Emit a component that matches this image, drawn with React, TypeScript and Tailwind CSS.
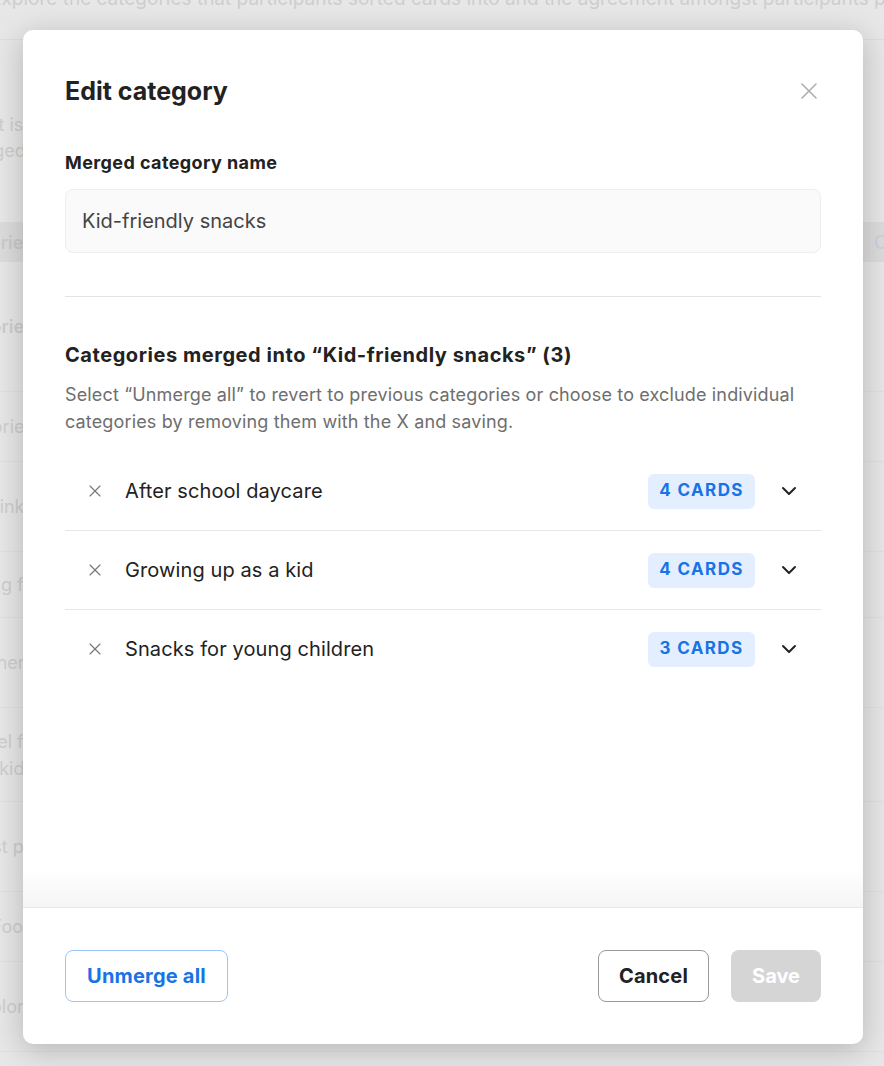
import { X, ChevronDown } from 'lucide-react'

const merged = [
  { name: 'After school daycare', cards: 4 },
  { name: 'Growing up as a kid', cards: 4 },
  { name: 'Snacks for young children', cards: 3 },
]

const behindRows = [
  { lines: ['Categories'], h: 'h-[130px]', bold: true },
  { lines: ['Categories'], h: 'h-[70px]' },
  { lines: ['Drinks'], h: 'h-[90px]' },
  { lines: ['Eating fo'], h: 'h-[66px]' },
  { lines: ['Another i'], h: 'h-[90px]' },
  { lines: ['Travel fo', 'kids'], h: 'h-[94px]' },
  { lines: ['Fast pa'], h: 'h-[90px]' },
  { lines: ['Food'], h: 'h-[70px]' },
  { lines: ['Explore'], h: 'h-[90px]' },
]

function Backdrop() {
  return (
    <div className="h-[1066px] w-[884px] overflow-hidden bg-[#e7e7e7] font-['Inter',sans-serif] text-[18px] text-[#cecece]">
      <p className="-ml-[10px] -mt-[13px] whitespace-nowrap text-[19px] leading-[24px]">
        Explore the categories that participants sorted cards into and the agreement amongst participants placed
      </p>
      <div className="mt-[28px] border-t border-[#dedede]" />
      <div className="-ml-[40px] mt-[72px] leading-[26px]">
        <p>What is</p>
        <p>Merged</p>
      </div>
      <div className="mt-[58px] flex h-[40px] items-center justify-between bg-[#dcdcdc]">
        <span className="-ml-[62px] font-semibold text-[#cbcbcb]">Categories</span>
        <span className="mr-[-14px] text-[#c7d0e2]">Co</span>
      </div>
      {behindRows.map((r, i) => (
        <div key={i} className={`${r.h} flex flex-col justify-center border-b border-[#e0e0e0] leading-[27px]`}>
          {r.lines.map((l) => (
            <div key={l} className="flex w-[34px] justify-end">
              <span className={`whitespace-nowrap ${r.bold ? 'font-semibold' : ''}`}>{l}</span>
            </div>
          ))}
        </div>
      ))}
    </div>
  )
}

export default function App() {
  return (
    <div className="relative h-[1066px] w-[884px] overflow-hidden">
      <Backdrop />
      <div className="absolute left-[23px] top-[30px] flex h-[1014px] w-[840px] flex-col rounded-[10px] bg-white font-['Inter',sans-serif] shadow-[0_6px_30px_rgba(0,0,0,0.22)]">
        <div className="flex-1 px-[42px] pt-[45px]">
          <div className="flex items-center justify-between">
            <h2 className="text-[25px] font-bold leading-[32px] text-[#222]">Edit category</h2>
            <button className="-mr-[2px] text-[#b0b0b0]">
              <X className="h-[28px] w-[28px]" strokeWidth={1.4} />
            </button>
          </div>

          <label className="mt-[44px] block text-[18px] font-bold leading-[24px] tracking-[0.4px] text-[#222]">
            Merged category name
          </label>
          <div className="mt-[14px] flex h-[64px] items-center rounded-[8px] border border-[#eeeeee] bg-[#fafafa] px-[16px] text-[20px] text-[#444]">
            Kid-friendly snacks
          </div>

          <div className="mt-[43px] border-t border-[#e3e3e3]" />

          <h3 className="mt-[44px] text-[20px] font-bold leading-[28px] tracking-[0.55px] text-[#222]">
            Categories merged into “Kid-friendly snacks” (3)
          </h3>
          <p className="mt-[12px] text-[18px] leading-[27px] tracking-[0.15px] text-[#6e6e6e]">
            Select “Unmerge all” to revert to previous categories or choose to exclude individual categories by removing them with the X and saving.
          </p>

          <ul className="mt-[17px]">
            {merged.map((m, i) => (
              <li
                key={m.name}
                className={`flex items-center ${i < merged.length - 1 ? 'h-[79px] border-b border-[#e6e6e6]' : 'h-[78px]'}`}
              >
                <X className="ml-[20px] h-[20px] w-[20px] text-[#777]" strokeWidth={1.4} />
                <span className="ml-[20px] flex-1 text-[20px] tracking-[0.1px] text-[#222]">{m.name}</span>
                <span className="flex h-[35px] w-[107px] items-center justify-center rounded-[6px] bg-[#e3efff] text-[17px] font-bold tracking-[1.4px] text-[#1873e6]">
                  {m.cards} CARDS
                </span>
                <ChevronDown className="ml-[22px] mr-[20px] h-[24px] w-[24px] text-[#222]" strokeWidth={2} />
              </li>
            ))}
          </ul>
        </div>

        <div className="relative flex items-center justify-between border-t border-[#e8e8e8] px-[42px] pb-[42px] pt-[42px]">
          <div className="pointer-events-none absolute -top-[40px] left-0 right-0 h-[39px] bg-gradient-to-b from-white/0 to-[#f5f5f5]" />
          <button className="h-[52px] w-[163px] rounded-[8px] border border-[#9cc3fa] text-[20px] font-bold tracking-[0.2px] text-[#1873e6]">
            Unmerge all
          </button>
          <div className="flex gap-[22px]">
            <button className="h-[52px] w-[111px] rounded-[8px] border border-[#999] text-[20px] font-bold tracking-[0.2px] text-[#222]">
              Cancel
            </button>
            <button className="h-[52px] w-[90px] rounded-[8px] bg-[#d5d5d5] text-[20px] font-bold text-white">
              Save
            </button>
          </div>
        </div>
      </div>
    </div>
  )
}
